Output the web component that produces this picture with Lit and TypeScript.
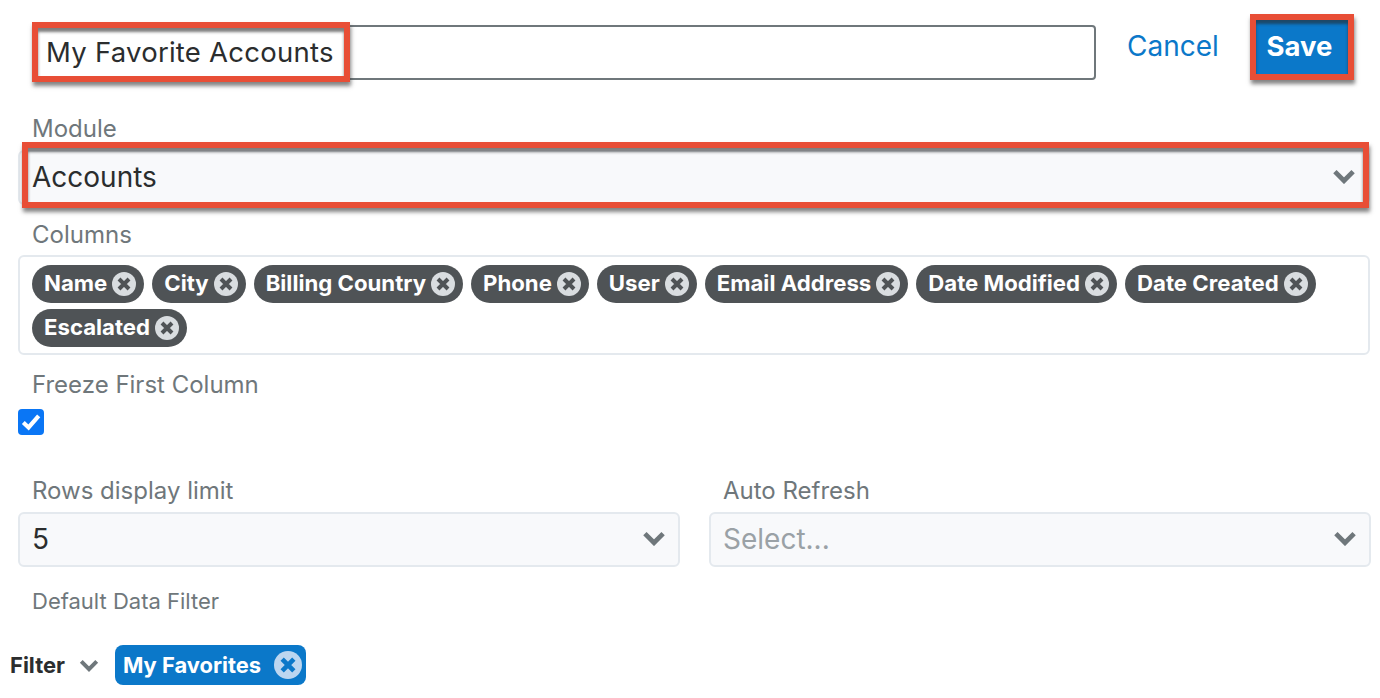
import { LitElement, html, css, svg } from "lit";
import { customElement } from "lit/decorators.js";

const chevron = (cls: string) => html`<svg class=${cls} viewBox="0 0 22 14" aria-hidden="true"><path d="M2.5 2.5l8.5 8.5 8.5-8.5" fill="none" stroke="currentColor" stroke-width="4.4" /></svg>`;
const xCircle = (cls: string) => html`<svg class=${cls} viewBox="0 0 24 24" aria-hidden="true"><circle cx="12" cy="12" r="12" class="disc" />${svg`<path d="M7 7l10 10M17 7L7 17" fill="none" class="cross" stroke-width="4" />`}</svg>`;

const columns = ["Name", "City", "Billing Country", "Phone", "User", "Email Address", "Date Modified", "Date Created", "Escalated"];

@customElement("app-root")
export class AppRoot extends LitElement {
  static styles = css`
    :host { display: block; width: 1380px; height: 698px; overflow: hidden; background: #fff; font-family: Inter, "Liberation Sans", sans-serif; color: #2b2d2e; box-sizing: border-box; }
    .page { display: flex; flex-direction: column; padding: 25px 10px 0 18px; position: relative; }
    .top { display: flex; align-items: flex-start; padding-left: 15px; height: 54px; }
    .name { width: 1063px; height: 55px; box-sizing: border-box; border: 2px solid #6f777b; border-radius: 4px; display: flex; align-items: center; padding: 0 0 1px 11px; font-size: 27.5px; letter-spacing: 0.25px; flex: none; }
    .cancel { margin-left: 31px; font-size: 28px; line-height: 42px; color: #0b78c9; width: 90px; white-space: nowrap; flex: none; }
    .save { margin-left: 39px; margin-top: -5px; width: 92px; height: 54px; padding: 0 5px 2px 0; box-sizing: border-box; background: #0b78c9; color: #fff; font-weight: 700; font-size: 27.5px; display: flex; align-items: center; justify-content: center; flex: none; }
    .label { font-size: 24px; line-height: 32px; color: #6f777b; padding-left: 14px; white-space: nowrap; }
    .lab-module { margin-top: 33px; height: 38px; line-height: 34px; }
    .select { height: 55px; box-sizing: border-box; border: 2px solid #e4e9ee; border-radius: 6px; background: #f8f9fb; display: flex; align-items: center; justify-content: space-between; padding: 0 12px 2px 12px; font-size: 28px; }
    .chev { width: 24px; height: 15px; color: #6f777b; flex: none; }
    .lab-cols { margin-top: 13px; height: 37px; line-height: 34px; }
    .pills { height: 100px; box-sizing: border-box; border: 2px solid #e4e9ee; border-radius: 6px; padding: 8px 12px; display: flex; flex-wrap: wrap; align-content: flex-start; gap: 6px 8px; }
    .pill { height: 38px; border-radius: 19px; background: #4f5356; color: #fff; font-weight: 700; font-size: 22.2px; display: flex; align-items: center; gap: 5px; padding: 0 8px 0 12px; box-sizing: border-box; white-space: nowrap; }
    .pill span { display: block; margin-bottom: 4px; }
    .x { width: 24px; height: 24px; flex: none; }
    .pill .disc { fill: #d9dde0; }
    .pill .cross { stroke: #4f5356; }
    .lab-freeze { margin-top: 14px; height: 40px; }
    .check { width: 26px; height: 26px; border-radius: 4px; background: #0a76f5; display: flex; align-items: center; justify-content: center; }
    .check svg { width: 22px; height: 22px; }
    .two { display: grid; grid-template-columns: 662px 662px; column-gap: 29px; margin-top: 38px; }
    .lab-row { height: 39px; line-height: 36px; }
    .placeholder { color: #9aa1a6; }
    .lab-filter { margin-top: 16px; font-size: 22px; height: 62px; line-height: 36px; }
    .filter { display: flex; align-items: center; height: 40px; margin-left: -8px; }
    .filter b { font-size: 22px; font-weight: 700; width: 70px; }
    .filter .chev { width: 20px; height: 13px; margin-left: -1px; margin-right: -1px; }
    .fav { margin-left: 17px; height: 40px; width: 191px; box-sizing: border-box; border-radius: 8px; background: #0b78c9; color: #fff; font-weight: 700; font-size: 21.9px; display: flex; align-items: center; justify-content: space-between; padding: 0 4px 0 8px; white-space: nowrap; }
    .fav .x { width: 28px; height: 28px; }
    .fav .disc { fill: #bcd6f0; }
    .fav .cross { stroke: #0b78c9; }
    .mark { position: absolute; box-sizing: border-box; border: 6px solid #e84e36; box-shadow: 1px 4px 4px rgba(50,50,50,.6), inset 0 4px 3px rgba(40,40,40,.6); pointer-events: none; }
    .m1 { left: 32px; top: 22px; width: 318px; height: 60px; }
    .m2 { left: 1250px; top: 14px; width: 104px; height: 66px; }
    .m3 { left: 22px; top: 142px; width: 1347px; height: 66px; }
  `;

  render() {
    return html`
      <div class="page">
        <div class="top">
          <div class="name">My Favorite Accounts</div>
          <div class="cancel">Cancel</div>
          <div class="save">Save</div>
        </div>
        <div class="label lab-module">Module</div>
        <div class="select"><span>Accounts</span>${chevron("chev")}</div>
        <div class="label lab-cols">Columns</div>
        <div class="pills">
          ${columns.map((c) => html`<div class="pill"><span>${c}</span>${xCircle("x")}</div>`)}
        </div>
        <div class="label lab-freeze">Freeze First Column</div>
        <div class="check"><svg viewBox="0 0 20 20" aria-hidden="true"><path d="M3 10.5l4.8 4.5L17 4.5" fill="none" stroke="#fff" stroke-width="3.8" /></svg></div>
        <div class="two">
          <div>
            <div class="label lab-row">Rows display limit</div>
            <div class="select"><span>5</span>${chevron("chev")}</div>
          </div>
          <div>
            <div class="label lab-row">Auto Refresh</div>
            <div class="select"><span class="placeholder">Select...</span>${chevron("chev")}</div>
          </div>
        </div>
        <div class="label lab-filter">Default Data Filter</div>
        <div class="filter">
          <b>Filter</b>${chevron("chev")}
          <div class="fav">My Favorites${xCircle("x")}</div>
        </div>
        <div class="mark m1"></div>
        <div class="mark m2"></div>
        <div class="mark m3"></div>
      </div>
    `;
  }
}
